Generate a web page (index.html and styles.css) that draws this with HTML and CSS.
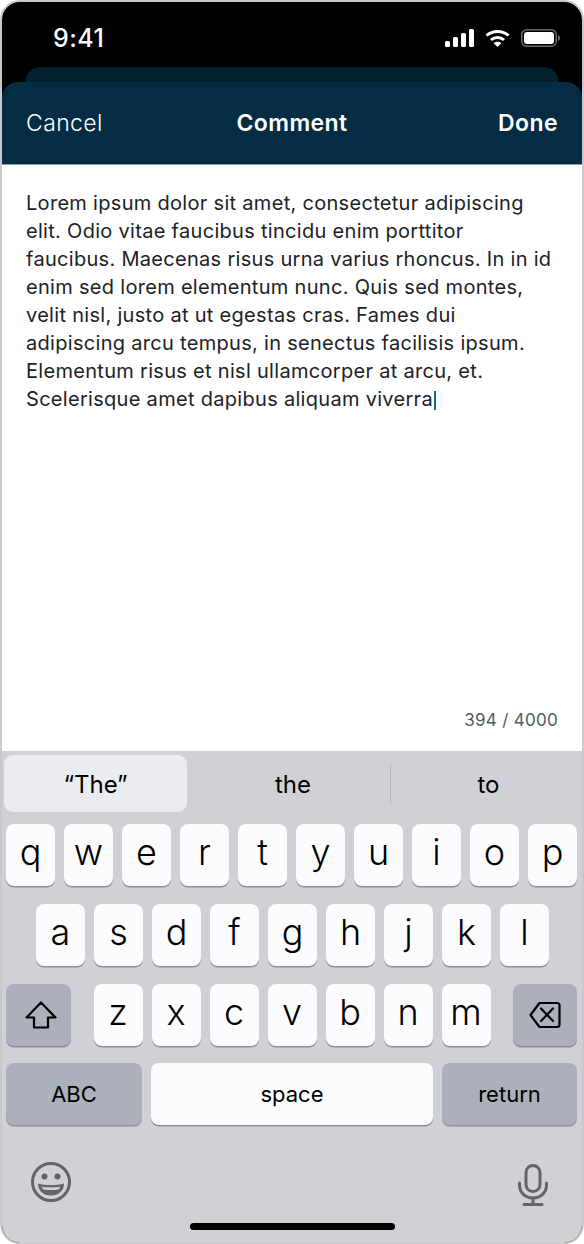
FILE: index.html
```html
<!DOCTYPE html>
<html lang="en">

<head>
    <meta charset="UTF-8">
    <meta name="viewport" content="width=device-width, initial-scale=1.0">
    <title>Comment</title>
    <link rel="stylesheet" href="styles.css">
</head>

<body>

    <div class="phone">
        <!-- Status bar -->
        <div class="status-bar">
            <span class="time">9:41</span>
            <div class="status-icons">
                <svg width="29" height="18" viewBox="0 0 29 18" fill="#fff">
                    <rect x="0" y="12" width="5" height="6" rx="1.5"/>
                    <rect x="8" y="8" width="5" height="10" rx="1.5"/>
                    <rect x="16" y="4" width="5" height="14" rx="1.5"/>
                    <rect x="24" y="0" width="5" height="18" rx="1.5"/>
                </svg>
                <svg class="wifi" width="25" height="18" viewBox="0 0 25 18" fill="none" stroke="#fff" stroke-width="3">
                    <path d="M1.5 6.5C7.5 1 17.5 1 23.5 6.5"/>
                    <path d="M6 11C9.5 7.8 15.5 7.8 19 11"/>
                    <path d="M12.5 18L8.6 14.2C10.6 12.3 14.4 12.3 16.4 14.2Z" fill="#fff" stroke="none"/>
                </svg>
                <svg class="battery" width="39" height="18" viewBox="0 0 39 18" fill="none">
                    <rect x="0.75" y="0.75" width="34.5" height="16.5" rx="5" stroke="#6b6b6b" stroke-width="1.5"/>
                    <rect x="3" y="3" width="30" height="12" rx="3" fill="#fff"/>
                    <path d="M37 6V12C38.2 11.5 39 10.3 39 9C39 7.7 38.2 6.5 37 6Z" fill="#6b6b6b"/>
                </svg>
            </div>
        </div>

        <div class="sheet-back"></div>

        <!-- Header of the sheet -->
        <div class="sheet-header">
            <span class="header-action">Cancel</span>
            <span class="header-title">Comment</span>
            <span class="header-done">Done</span>
        </div>

        <!-- Comment text -->
        <div class="comment-body">
            <p class="comment-text">Lorem ipsum dolor sit amet, consectetur adipiscing elit. Odio vitae faucibus tincidu enim porttitor faucibus. Maecenas risus urna varius rhoncus. In in id enim sed lorem elementum nunc. Quis sed montes, velit nisl, justo at ut egestas cras. Fames dui adipiscing arcu tempus, in senectus facilisis ipsum. Elementum risus et nisl ullamcorper at arcu, et. Scelerisque amet dapibus aliquam viverra<span class="caret"></span></p>
            <div class="counter">394 / 4000</div>
        </div>

        <!-- Keyboard -->
        <div class="keyboard">
            <div class="suggestions">
                <div class="suggestion active">“The”</div>
                <div class="suggestion middle">the</div>
                <div class="suggestion-divider"></div>
                <div class="suggestion last">to</div>
            </div>

            <div class="key-row">
                <div class="key">q</div>
                <div class="key">w</div>
                <div class="key">e</div>
                <div class="key">r</div>
                <div class="key">t</div>
                <div class="key">y</div>
                <div class="key">u</div>
                <div class="key">i</div>
                <div class="key">o</div>
                <div class="key">p</div>
            </div>

            <div class="key-row row-home">
                <div class="key">a</div>
                <div class="key">s</div>
                <div class="key">d</div>
                <div class="key">f</div>
                <div class="key">g</div>
                <div class="key">h</div>
                <div class="key">j</div>
                <div class="key">k</div>
                <div class="key">l</div>
            </div>

            <div class="key-row row-split">
                <div class="key key-dark key-side shift">
                    <svg width="32" height="28" viewBox="0 0 32 28" fill="none" stroke="#000" stroke-width="2.2" stroke-linejoin="round">
                        <path d="M16 1.5L30.5 16.5H23V26.5H9V16.5H1.5Z"/>
                    </svg>
                </div>
                <div class="letters">
                    <div class="key">z</div>
                    <div class="key">x</div>
                    <div class="key">c</div>
                    <div class="key">v</div>
                    <div class="key">b</div>
                    <div class="key">n</div>
                    <div class="key">m</div>
                </div>
                <div class="key key-dark key-side backspace">
                    <svg width="32" height="28" viewBox="0 0 32 28" fill="none" stroke="#000" stroke-width="2.2" stroke-linejoin="round" stroke-linecap="round">
                        <path d="M10.5 2H28C29.4 2 30.5 3.1 30.5 4.5V23.5C30.5 24.9 29.4 26 28 26H10.5L1.5 14Z"/>
                        <path d="M12 7.5L24 20M24 7.5L12 20"/>
                    </svg>
                </div>
            </div>

            <div class="key-row row-split row-bottom">
                <div class="key key-dark key-wide">ABC</div>
                <div class="key key-space">space</div>
                <div class="key key-dark key-wide key-return">return</div>
            </div>

            <div class="keyboard-footer">
                <svg width="40" height="40" viewBox="0 0 40 40">
                    <circle cx="20" cy="20" r="18.5" fill="none" stroke="#626469" stroke-width="3"/>
                    <circle cx="13.5" cy="14.5" r="3" fill="#626469"/>
                    <circle cx="26.5" cy="14.5" r="3" fill="#626469"/>
                    <path d="M7 21.5C14 23.5 26 23.5 33 21.5C33 29 27.5 33.5 20 33.5C12.5 33.5 7 29 7 21.5Z" fill="#626469"/>
                    <path d="M10.5 24.5C16 25.7 24 25.7 29.5 24.5C29 25.8 28.5 26.5 27.6 27.4C23 28.2 17 28.2 12.4 27.4C11.5 26.5 11 25.8 10.5 24.5Z" fill="#d0d1d6"/>
                </svg>
                <svg class="mic" width="30" height="42" viewBox="0 0 30 42" fill="none" stroke="#626469" stroke-width="3" stroke-linecap="round">
                    <rect x="8" y="1.5" width="14" height="26" rx="7"/>
                    <path d="M1.5 19V21C1.5 28.5 7.5 34 15 34C22.5 34 28.5 28.5 28.5 21V19"/>
                    <path d="M15 34V40M6 40.5H24"/>
                </svg>
            </div>

            <div class="home-bar"></div>
        </div>
    </div>

</body>

</html>
```

FILE: styles.css
```css
* {
    box-sizing: border-box;
}

body {
    margin: 0;
    background-color: #ffffff;
    font-family: 'Inter', sans-serif;
}

.phone {
    position: relative;
    width: 584px;
    height: 1244px;
    display: flex;
    flex-direction: column;
    border: 2px solid #c9c9cb;
    border-bottom-width: 1px;
    border-radius: 20px;
    overflow: hidden;
    background-color: #000000;
}

.status-bar {
    height: 80px;
    padding: 18px 22px 0 51px;
    display: flex;
    justify-content: space-between;
    align-items: flex-start;
    flex-shrink: 0;
}

.time {
    color: #ffffff;
    font-size: 25px;
    line-height: 36px;
    font-weight: 500;
    letter-spacing: 0.5px;
}

.status-icons {
    display: flex;
    align-items: center;
    gap: 11px;
    padding-top: 9px;
}

.sheet-back {
    position: absolute;
    top: 65px;
    left: 24px;
    width: 532px;
    height: 30px;
    border-radius: 14px 14px 0 0;
    background-color: #03202f;
}

.sheet-header {
    position: relative;
    height: 83px;
    padding: 0 24px;
    display: flex;
    align-items: center;
    justify-content: space-between;
    flex-shrink: 0;
    background-color: #042d44;
    border-radius: 16px 16px 0 0;
    border-bottom: 1px solid #8fa3ae;
    color: #ffffff;
    font-size: 23px;
    letter-spacing: 0.4px;
}

.header-action {
    width: 100px;
    font-weight: 300;
}

.header-title {
    font-weight: 600;
}

.header-done {
    width: 100px;
    text-align: right;
    font-weight: 600;
}

.comment-body {
    flex: 1;
    padding: 24px 24px 21px;
    display: flex;
    flex-direction: column;
    justify-content: space-between;
    background-color: #ffffff;
}

.comment-text {
    margin: 0;
    max-width: 528px;
    color: #1c2226;
    font-size: 20px;
    line-height: 28px;
    letter-spacing: 0.3px;
}

.caret {
    display: inline-block;
    width: 2px;
    height: 19px;
    margin-left: 1px;
    vertical-align: -4px;
    background-color: #0f6a8c;
}

.counter {
    text-align: right;
    color: #4f5b64;
    font-size: 17px;
    line-height: 20px;
    letter-spacing: 0.3px;
}

.keyboard {
    height: 492px;
    padding: 4px 5px 0 4px;
    display: flex;
    flex-direction: column;
    flex-shrink: 0;
    background-color: #d0d1d6;
}

.suggestions {
    height: 57px;
    margin-left: -2px;
    display: flex;
    align-items: center;
}

.suggestion {
    height: 100%;
    flex-shrink: 0;
    display: flex;
    align-items: center;
    justify-content: center;
    padding-top: 2px;
    border-radius: 9px;
    color: #000000;
    font-size: 24px;
}

.suggestion.active {
    width: 183px;
    background-color: #ebecf0;
}

.suggestion.middle {
    width: 194px;
    margin-left: 9px;
}

.suggestion.last {
    width: 195px;
}

.suggestion-divider {
    width: 1px;
    height: 38px;
    flex-shrink: 0;
    background-color: #b4b5ba;
}

.key-row {
    height: 62px;
    margin-top: 12px;
    display: flex;
    gap: 9px;
}

.key-row + .key-row {
    margin-top: 18px;
}

.key-row + .row-bottom {
    margin-top: 17px;
}

.row-home {
    padding-left: 30px;
}

.row-split {
    justify-content: space-between;
    gap: 0;
}

.key {
    width: 49px;
    height: 62px;
    display: flex;
    align-items: center;
    justify-content: center;
    padding-bottom: 6px;
    border-radius: 8px;
    background-color: #fcfcfe;
    box-shadow: 0 1.5px 0 #8f9095;
    color: #000000;
    font-size: 36px;
    font-weight: 300;
}

.letters {
    display: flex;
    gap: 9px;
}

.key-dark {
    background-color: #abb0ba;
}

.key-side {
    width: 65px;
    padding-bottom: 0;
}

.backspace {
    width: 64px;
}

.shift svg {
    margin-left: 4px;
}

.key-wide {
    width: 136px;
    padding-bottom: 0;
    font-size: 22px;
    font-weight: 400;
}

.key-return {
    width: 135px;
}

.key-space {
    width: 282px;
    padding-bottom: 0;
    font-size: 22px;
    font-weight: 400;
}

.keyboard-footer {
    margin-top: 37px;
    padding: 0 29px 0 25px;
    display: flex;
    justify-content: space-between;
    align-items: flex-start;
}

.mic {
    margin-top: 2px;
}

.home-bar {
    position: absolute;
    left: 188px;
    bottom: 13px;
    width: 205px;
    height: 7px;
    border-radius: 4px;
    background-color: #000000;
}
```
